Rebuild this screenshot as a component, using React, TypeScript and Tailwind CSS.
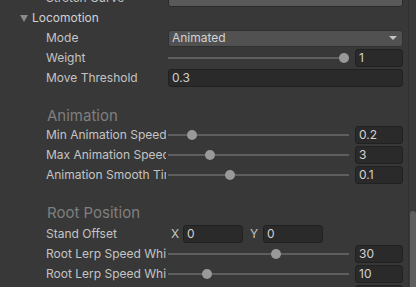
import React from 'react';

const font = { fontFamily: 'Inter, "Noto Sans", sans-serif' };

const Field: React.FC<{ value: string; className?: string }> = ({ value, className }) => (
  <div className={`h-[18px] bg-[#2a2a2a] border border-[#212121] rounded-[3px] px-[3px] flex items-center text-[#d2d2d2] leading-none ${className ?? ''}`}>
    {value}
  </div>
);

const Row: React.FC<{ label: string; children?: React.ReactNode }> = ({ label, children }) => (
  <div className="h-5 flex items-center">
    <div className="w-[120px] ml-[46px] shrink-0 overflow-hidden whitespace-nowrap text-[#c4c4c4]">
      {label}
    </div>
    <div className="ml-[2px] w-[235px] flex items-center">{children}</div>
  </div>
);

const Slider: React.FC<{ knob: number; value: string }> = ({ knob, value }) => (
  <div className="flex items-center w-full">
    <div className="relative w-[181px] h-[18px] flex items-center">
      <div className="w-full h-[2px] bg-[#5e5e5e]" />
      <div className="absolute top-[4px] w-[10px] h-[10px] rounded-full bg-[#999999]" style={{ left: knob - 5 }} />
    </div>
    <Field value={value} className="ml-[6px] w-[48px]" />
  </div>
);

const Header: React.FC<{ label: string; h: number; pt: number }> = ({ label, h, pt }) => (
  <div className="pl-[47px] text-[15px] leading-[18px] text-[#7f7f7f]" style={{ height: h, paddingTop: pt }}>
    {label}
  </div>
);

export default function App() {
  return (
    <div className="w-[416px] h-[287px] overflow-hidden bg-[#383838] flex text-[12px]" style={font}>
      <div className="w-[408px] -mt-3">
        {/* Stretch Curve (cut off) */}
        <div className="h-5 flex items-center">
          <div className="pl-[46px] w-[166px] shrink-0 text-[#c4c4c4]">Stretch Curve</div>
          <div className="ml-[2px] w-[235px] h-[18px] bg-[#595959] border border-[#2b2b2b] rounded-[3px]" />
        </div>
        {/* Locomotion foldout */}
        <div className="h-5 flex items-center pl-[19px] text-[#d2d2d2]">
          <svg width="10" height="10" viewBox="0 0 10 10" className="mr-[3px]">
            <path d="M1 2 L9 2 L5 9 Z" fill="#8a8a8a" />
          </svg>
          Locomotion
        </div>
        <Row label="Mode">
          <div className="w-full h-[17px] bg-[#515151] border border-[#303030] rounded-[3px] px-[3px] flex items-center justify-between text-[#d2d2d2]">
            <span>Animated</span>
            <svg width="8" height="6" viewBox="0 0 8 6" className="mr-[2px]">
              <path d="M0 1 L8 1 L4 5 Z" fill="#c4c4c4" />
            </svg>
          </div>
        </Row>
        <Row label="Weight"><Slider knob={176} value="1" /></Row>
        <Row label="Move Threshold"><Field value="0.3" className="w-full" /></Row>

        <Header label="Animation" h={37} pt={19} />
        <Row label="Min Animation Speed"><Slider knob={24} value="0.2" /></Row>
        <Row label="Max Animation Speed"><Slider knob={42} value="3" /></Row>
        <Row label="Animation Smooth Time"><Slider knob={62} value="0.1" /></Row>

        <Header label="Root Position" h={39} pt={19} />
        <Row label="Stand Offset">
          <span className="w-[15px] pl-[3px] text-[#c4c4c4]">X</span>
          <Field value="0" className="w-[60px]" />
          <span className="w-[20px] pl-[7px] text-[#c4c4c4]">Y</span>
          <Field value="0" className="w-[60px]" />
        </Row>
        <Row label="Root Lerp Speed While Moving"><Slider knob={108} value="30" /></Row>
        <Row label="Root Lerp Speed While Standing"><Slider knob={39} value="10" /></Row>
        <Row label="Root Lerp Speed While Other"><Slider knob={100} value="" /></Row>
      </div>
      {/* scrollbar */}
      <div className="flex-1 border-l border-[#303030] bg-[#3a3a3a] flex flex-col">
        <div className="h-[211px]" />
        <div className="flex-1 ml-[1px] rounded-t-[3px] bg-[#5f5f5f]" />
      </div>
    </div>
  );
}
